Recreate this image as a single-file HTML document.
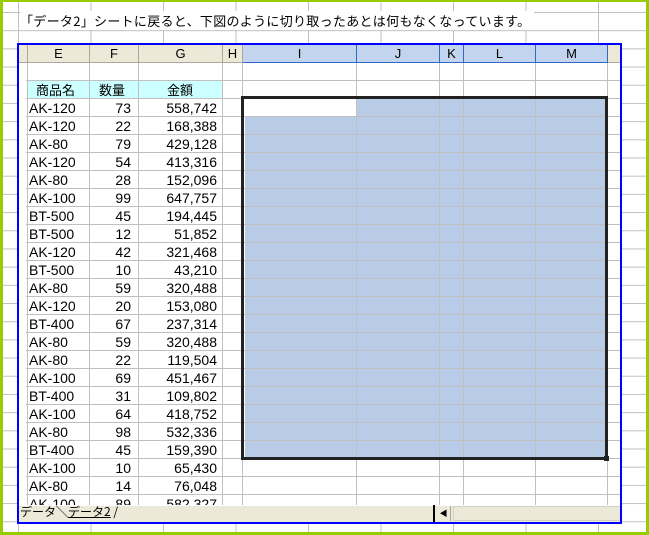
<!DOCTYPE html><html><head><meta charset="utf-8"><style>
*{margin:0;padding:0;box-sizing:border-box}
body{width:649px;height:535px;position:relative;overflow:hidden;background:#fff;font-family:"MS PGothic","Noto Sans CJK JP",sans-serif;font-size:13px;color:#000}
.a{position:absolute}
#bg{left:0;top:0;width:649px;height:535px;
background-image:linear-gradient(90deg,#c0c0c0 1px,transparent 1px),linear-gradient(#c0c0c0 1px,transparent 1px);
background-size:72.5px 100%,100% 18.2px;background-position:18px 0,0 12px}
#frame{left:0;top:0;width:649px;height:535px;border:3px solid #99cc00;border-top:2px solid #99cc00}
#txt{left:20px;top:11px;font-size:13px;letter-spacing:0.3px;background:#fff;padding-right:4px;white-space:nowrap}
#sheet{left:17px;top:43px;width:605px;height:481px;border:2px solid #0000ff;background:#fff;overflow:hidden}
.hd{position:absolute;top:0;height:18px;background:#ece9d8;border-right:1px solid #aca899;border-bottom:1px solid #aca899;text-align:center;line-height:18px;font-family:"Liberation Sans",sans-serif;font-size:13px}
.hs{background:#c3d4ee;border-right:1px solid #316ac5;border-bottom:1px solid #316ac5}
.vl{position:absolute;top:18px;width:1px;height:460px;background:#c0c0c0}
.hl{position:absolute;left:7px;height:1px;width:600px;background:#c0c0c0}
.r{position:absolute;height:18px;line-height:18px;font-family:"Liberation Sans",sans-serif;font-size:14px}
.c1{left:10px}.c2{width:49px;left:69px;text-align:right;padding-right:6px}.c3{left:118px;width:84px;text-align:right;padding-right:4px}
</style></head><body>
<div class="a" id="bg"></div>
<div class="a" id="txt">「データ2」シートに戻ると、下図のように切り取ったあとは何もなくなっています。</div>
<div class="a" id="sheet">
<div class="hd" style="left:0;width:9px"></div>
<div class="hd" style="left:9px;width:62px">E</div>
<div class="hd" style="left:71px;width:49px">F</div>
<div class="hd" style="left:120px;width:84px">G</div>
<div class="hd" style="left:204px;width:20px">H</div>
<div class="hd hs" style="left:224px;width:114px">I</div>
<div class="hd hs" style="left:338px;width:83px">J</div>
<div class="hd hs" style="left:421px;width:24px">K</div>
<div class="hd hs" style="left:445px;width:72px">L</div>
<div class="hd hs" style="left:517px;width:72px">M</div>
<div class="hd" style="left:589px;width:20px;border-right:0"></div>
<div class="a" style="left:9px;top:36px;width:195px;height:18px;background:#ccffff"></div>
<div class="a" style="left:226px;top:53px;width:362px;height:360px;background:#b8cce8"></div>
<div class="a" style="left:226px;top:53px;width:112px;height:18px;background:#fff"></div>
<div class="vl" style="left:8px"></div><div class="vl" style="left:70px"></div><div class="vl" style="left:119px"></div><div class="vl" style="left:203px"></div><div class="vl" style="left:223px"></div><div class="vl" style="left:337px"></div><div class="vl" style="left:420px"></div><div class="vl" style="left:444px"></div><div class="vl" style="left:516px"></div><div class="vl" style="left:588px"></div>
<div class="hl" style="top:35px"></div><div class="hl" style="top:53px"></div><div class="hl" style="top:71px"></div><div class="hl" style="top:89px"></div><div class="hl" style="top:107px"></div><div class="hl" style="top:125px"></div><div class="hl" style="top:143px"></div><div class="hl" style="top:161px"></div><div class="hl" style="top:179px"></div><div class="hl" style="top:197px"></div><div class="hl" style="top:215px"></div><div class="hl" style="top:233px"></div><div class="hl" style="top:251px"></div><div class="hl" style="top:269px"></div><div class="hl" style="top:287px"></div><div class="hl" style="top:305px"></div><div class="hl" style="top:323px"></div><div class="hl" style="top:341px"></div><div class="hl" style="top:359px"></div><div class="hl" style="top:377px"></div><div class="hl" style="top:395px"></div><div class="hl" style="top:413px"></div><div class="hl" style="top:431px"></div><div class="hl" style="top:449px"></div>
<div class="a" style="left:222px;top:51px;width:367px;height:364px;border:3px solid #222"></div>
<div class="a" style="left:585px;top:411px;width:5px;height:5px;background:#222"></div>
<div class="r" style="top:36px;left:17px;font-family:'Noto Sans CJK JP',sans-serif;font-size:13px">商品名</div>
<div class="r" style="top:36px;left:80px;font-family:'Noto Sans CJK JP',sans-serif;font-size:13px">数量</div>
<div class="r" style="top:36px;left:148px;font-family:'Noto Sans CJK JP',sans-serif;font-size:13px">金額</div>
<div class="r c1" style="top:54px">AK-120</div><div class="r c2" style="top:54px">73</div><div class="r c3" style="top:54px">558,742</div>
<div class="r c1" style="top:72px">AK-120</div><div class="r c2" style="top:72px">22</div><div class="r c3" style="top:72px">168,388</div>
<div class="r c1" style="top:90px">AK-80</div><div class="r c2" style="top:90px">79</div><div class="r c3" style="top:90px">429,128</div>
<div class="r c1" style="top:108px">AK-120</div><div class="r c2" style="top:108px">54</div><div class="r c3" style="top:108px">413,316</div>
<div class="r c1" style="top:126px">AK-80</div><div class="r c2" style="top:126px">28</div><div class="r c3" style="top:126px">152,096</div>
<div class="r c1" style="top:144px">AK-100</div><div class="r c2" style="top:144px">99</div><div class="r c3" style="top:144px">647,757</div>
<div class="r c1" style="top:162px">BT-500</div><div class="r c2" style="top:162px">45</div><div class="r c3" style="top:162px">194,445</div>
<div class="r c1" style="top:180px">BT-500</div><div class="r c2" style="top:180px">12</div><div class="r c3" style="top:180px">51,852</div>
<div class="r c1" style="top:198px">AK-120</div><div class="r c2" style="top:198px">42</div><div class="r c3" style="top:198px">321,468</div>
<div class="r c1" style="top:216px">BT-500</div><div class="r c2" style="top:216px">10</div><div class="r c3" style="top:216px">43,210</div>
<div class="r c1" style="top:234px">AK-80</div><div class="r c2" style="top:234px">59</div><div class="r c3" style="top:234px">320,488</div>
<div class="r c1" style="top:252px">AK-120</div><div class="r c2" style="top:252px">20</div><div class="r c3" style="top:252px">153,080</div>
<div class="r c1" style="top:270px">BT-400</div><div class="r c2" style="top:270px">67</div><div class="r c3" style="top:270px">237,314</div>
<div class="r c1" style="top:288px">AK-80</div><div class="r c2" style="top:288px">59</div><div class="r c3" style="top:288px">320,488</div>
<div class="r c1" style="top:306px">AK-80</div><div class="r c2" style="top:306px">22</div><div class="r c3" style="top:306px">119,504</div>
<div class="r c1" style="top:324px">AK-100</div><div class="r c2" style="top:324px">69</div><div class="r c3" style="top:324px">451,467</div>
<div class="r c1" style="top:342px">BT-400</div><div class="r c2" style="top:342px">31</div><div class="r c3" style="top:342px">109,802</div>
<div class="r c1" style="top:360px">AK-100</div><div class="r c2" style="top:360px">64</div><div class="r c3" style="top:360px">418,752</div>
<div class="r c1" style="top:378px">AK-80</div><div class="r c2" style="top:378px">98</div><div class="r c3" style="top:378px">532,336</div>
<div class="r c1" style="top:396px">BT-400</div><div class="r c2" style="top:396px">45</div><div class="r c3" style="top:396px">159,390</div>
<div class="r c1" style="top:414px">AK-100</div><div class="r c2" style="top:414px">10</div><div class="r c3" style="top:414px">65,430</div>
<div class="r c1" style="top:432px">AK-80</div><div class="r c2" style="top:432px">14</div><div class="r c3" style="top:432px">76,048</div>
<div class="r c1" style="top:450px">AK-100</div><div class="r c2" style="top:450px">89</div><div class="r c3" style="top:450px">582,327</div>
<div class="a" style="left:0;top:460px;width:603px;height:17px;background:#ece9d8;border-top:1px solid #fff"></div>
<div class="a" style="left:1px;top:459px;font-size:12px;font-family:'Noto Sans CJK JP',sans-serif;line-height:16px">データ╲<span style="text-decoration:underline">データ2</span> /</div>
<div class="a" style="left:414px;top:460px;width:2px;height:17px;background:#000"></div>
<div class="a" style="left:418px;top:461px;width:14px;height:15px;background:#ece9d8;border-right:1px solid #aca899;font-size:8px;line-height:15px;text-align:center">◀</div>
<div class="a" style="left:434px;top:461px;width:169px;height:15px;border:1px solid #d4d0c8;background:#ece9d8"></div>
</div>
<div class="a" id="frame"></div>
</body></html>
